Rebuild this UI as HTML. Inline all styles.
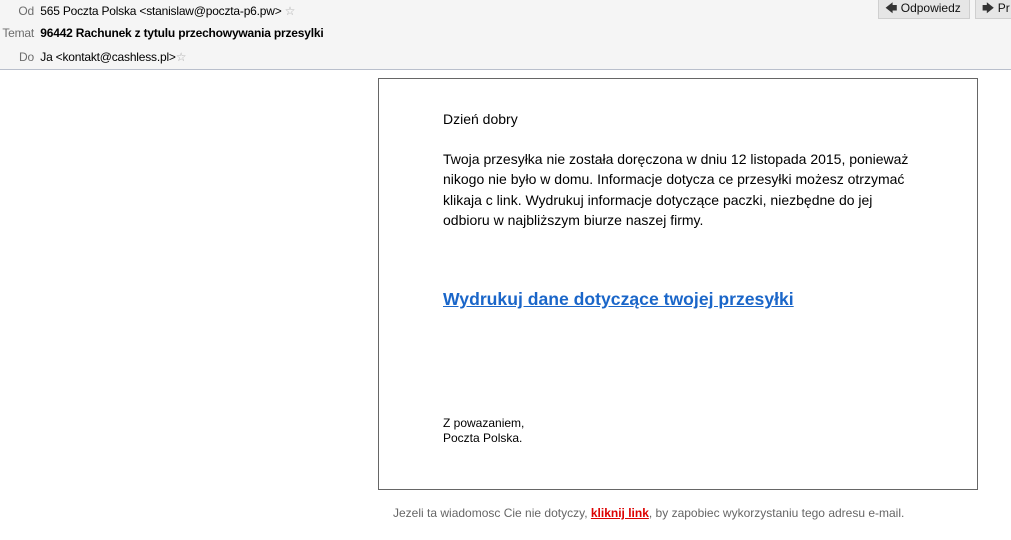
<!DOCTYPE html>
<html><head><meta charset="utf-8"><style>
body{margin:0;width:1011px;height:540px;background:#fff;font-family:"Liberation Sans",sans-serif;position:relative;overflow:hidden}
.hdr{position:absolute;left:0;top:0;width:1011px;height:69px;background:#f5f5f5;border-bottom:1px solid #b9bfcc}
.r{position:absolute;font-size:12px;color:#000;white-space:nowrap}
.l{color:#6d6d6d;display:inline-block;text-align:right}
.btn{position:absolute;top:0;height:18px;background:#e6e6e6;border:1px solid #cfcfcf;border-top:none;font-size:12px;line-height:17px;color:#111}
.box{position:absolute;left:378px;top:78px;width:598px;height:410px;border:1px solid #666}
.t{position:absolute;left:443px;font-size:14px;color:#000;white-space:nowrap}
</style></head><body>
<div class="hdr">
<div class="r" style="left:0;top:4px;letter-spacing:-0.2px"><span class="l" style="width:34px">Od</span>&nbsp; 565 Poczta Polska &lt;stanislaw@poczta-p6.pw&gt; <span style="color:#aaa">☆</span></div>
<div class="r" style="left:0;top:26px;letter-spacing:-0.2px"><span class="l" style="width:34px">Temat</span>&nbsp; <b>96442 Rachunek z tytulu przechowywania przesylki</b></div>
<div class="r" style="left:0;top:50px;letter-spacing:-0.2px"><span class="l" style="width:34px">Do</span>&nbsp; Ja &lt;kontakt@cashless.pl&gt;<span style="color:#aaa">☆</span></div>
<div class="btn" style="left:878px;width:90px"><span style="margin-left:6px;color:#333">🡄</span> Odpowiedz</div>
<div class="btn" style="left:975px;width:40px"><span style="margin-left:6px;color:#333">🡆</span> Pr</div>
</div>
<div class="box"></div>
<div class="t" style="top:111px">Dzień dobry</div>
<div class="t" style="top:149px;line-height:20.3px">Twoja przesyłka nie została doręczona w dniu 12 listopada 2015, ponieważ<br>nikogo nie było w domu. Informacje dotycza ce przesyłki możesz otrzymać<br>klikaja c link. Wydrukuj informacje dotyczące paczki, niezbędne do jej<br>odbioru w najbliższym biurze naszej firmy.</div>
<div class="t" style="top:289px;font-size:17.6px;font-weight:bold;color:#1a66c9;text-decoration:underline">Wydrukuj dane dotyczące twojej przesyłki</div>
<div class="t" style="top:416px;font-size:12px;line-height:15px">Z powazaniem,<br>Poczta Polska.</div>
<div class="r" style="left:393px;top:506px;color:#666">Jezeli ta wiadomosc Cie nie dotyczy, <b style="color:#d00;text-decoration:underline">kliknij link</b>, by zapobiec wykorzystaniu tego adresu e-mail.</div>
</body></html>
